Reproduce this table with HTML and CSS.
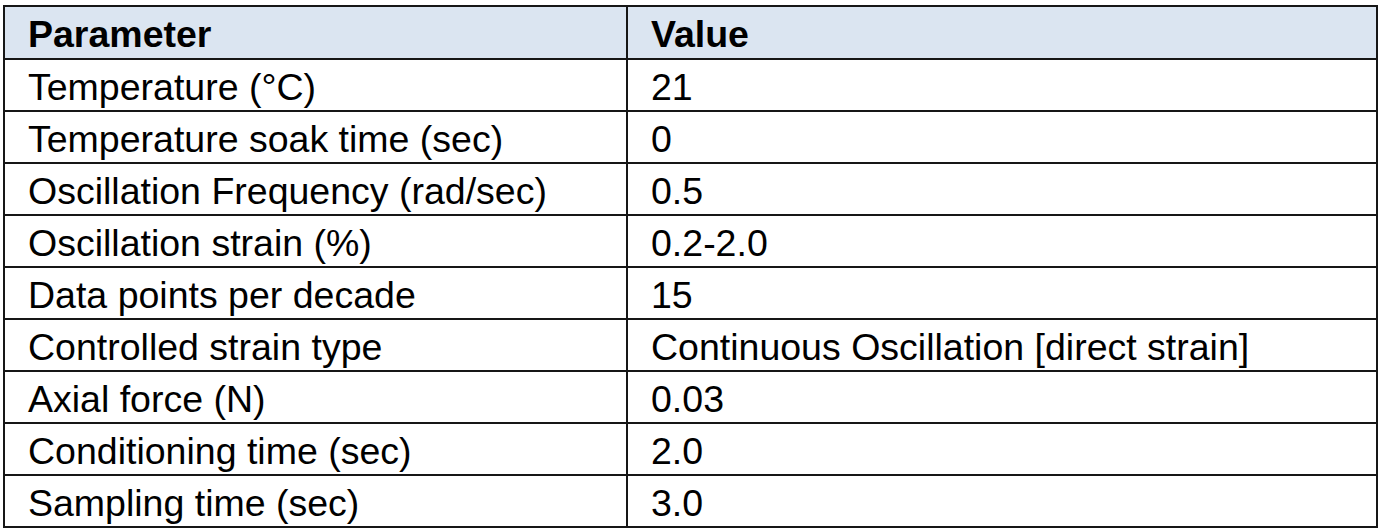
FILE: index.html
```html
<!DOCTYPE html>
<html>
<head>
<meta charset="utf-8">
<link rel="stylesheet" href="styles.css">
</head>
<body>
<table class="params">
  <thead>
    <tr class="head-row"><th class="col-param">Parameter</th><th class="col-value">Value</th></tr>
  </thead>
  <tbody>
    <tr><td>Temperature (°C)</td><td>21</td></tr>
    <tr><td>Temperature soak time (sec)</td><td>0</td></tr>
    <tr><td>Oscillation Frequency (rad/sec)</td><td>0.5</td></tr>
    <tr><td>Oscillation strain (%)</td><td>0.2-2.0</td></tr>
    <tr><td>Data points per decade</td><td>15</td></tr>
    <tr><td>Controlled strain type</td><td>Continuous Oscillation [direct strain]</td></tr>
    <tr><td>Axial force (N)</td><td>0.03</td></tr>
    <tr><td>Conditioning time (sec)</td><td>2.0</td></tr>
    <tr><td>Sampling time (sec)</td><td>3.0</td></tr>
  </tbody>
</table>
</body>
</html>
```

FILE: styles.css
```css
html, body {
  margin: 0;
  padding: 0;
  background: #ffffff;
}
body {
  padding: 5px 5px 4px 3px;
  font-family: "Liberation Sans", Arial, sans-serif;
  color: #000000;
}
.params {
  border-collapse: collapse;
  width: 1375px;
  table-layout: fixed;
}
.params th,
.params td {
  border: 2px solid #161616;
  padding: 3px 0 0 23px;
  text-align: left;
  vertical-align: middle;
  font-size: 37.5px;
  line-height: 40px;
  height: 52px;
  box-sizing: border-box;
  white-space: nowrap;
}
.params th {
  font-weight: bold;
  background: #dbe5f1;
  height: 53px;
}
.col-param {
  width: 623px;
}
```
